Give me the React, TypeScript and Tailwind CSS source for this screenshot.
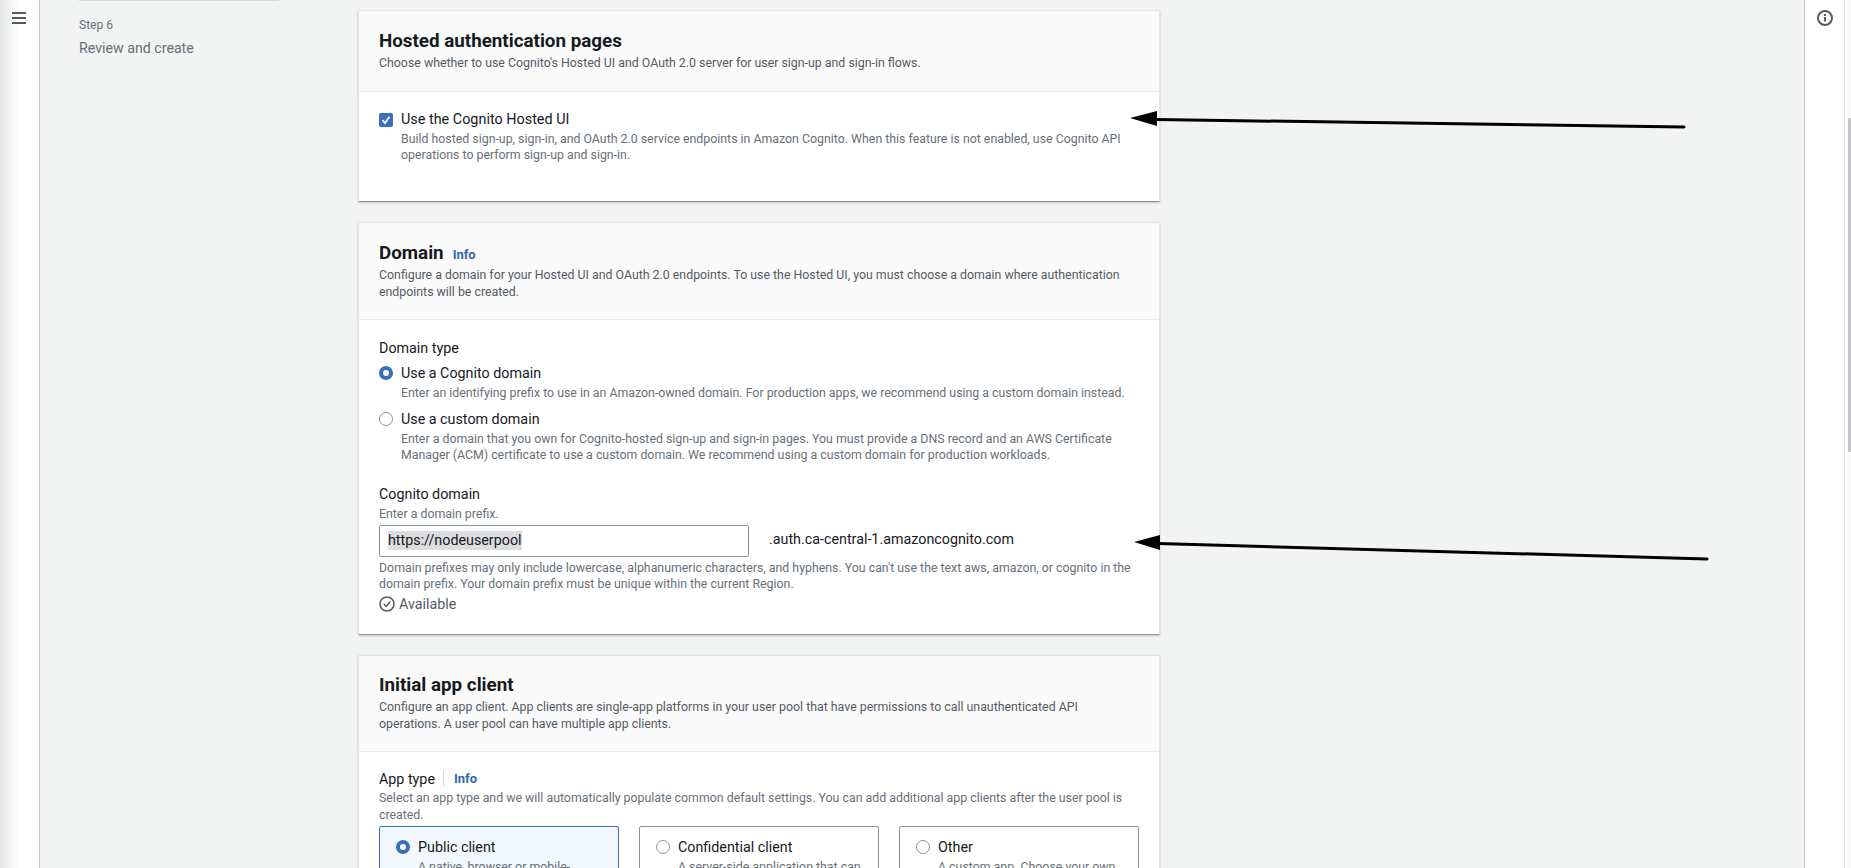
import React from 'react';

const Info = () => <a className="text-[13px] leading-[16px] font-bold text-[#2f67b3]">Info</a>;

const Card = ({ title, info, desc, children, className, headClass = 'pt-[18px]' }: { title: string; info?: boolean; desc: React.ReactNode; children: React.ReactNode; className: string; headClass?: string }) => (
  <section className={`bg-white border border-[#e3e5e6] border-b-[#8d9499] shadow-[0_1px_2px_rgba(0,28,36,0.2)] ${className}`}>
    <header className={`bg-[#fafafa] border-b border-[#eaeded] px-[20px] pb-[19px] ${headClass}`}>
      <div className="flex items-baseline gap-[9px]">
        <h2 className="text-[18.8px] leading-[24px] font-bold text-[#16191f]">{title}</h2>
        {info && <Info />}
      </div>
      <p className="text-[12.35px] leading-[16.5px] text-[#545b64] mt-[2px]">{desc}</p>
    </header>
    {children}
  </section>
);

const Radio = ({ checked }: { checked?: boolean }) => (
  <span className={`shrink-0 w-[14px] h-[14px] rounded-full border mt-[3px] ${checked ? 'border-[4px] border-[#3a6fbd] bg-white' : 'border-[#879596] bg-white'}`} />
);

const Option = ({ checked, label, children }: { checked?: boolean; label: string; children: React.ReactNode }) => (
  <div className="flex gap-[8px]">
    <Radio checked={checked} />
    <div>
      <div className="text-[14.3px] leading-[20px] text-[#16191f]">{label}</div>
      <p className="text-[12.35px] leading-[16.5px] text-[#687078] mt-[2px]">{children}</p>
    </div>
  </div>
);

const Tile = ({ checked, label, children }: { checked?: boolean; label: string; children: React.ReactNode }) => (
  <div className={`flex-1 h-[80px] rounded-[2px] border px-[16px] pt-[10px] ${checked ? 'border-[#3a6fbd] bg-[#f1f7fd]' : 'border-[#879596] bg-white'}`}>
    <Option checked={checked} label={label}>{children}</Option>
  </div>
);

// annotation arrows drawn on top of the screenshot
const Arrows = () => (
  <svg className="absolute left-[0px] top-[0px] pointer-events-none" width="1851" height="868" viewBox="0 0 1851 868">
    <path d="M1156 119.5 L1684 127" stroke="#000" strokeWidth="3" strokeLinecap="round" fill="none" />
    <path d="M1130 118 L1157 111 L1157 126 Z" fill="#000" />
    <path d="M1158 543.5 L1707 559" stroke="#000" strokeWidth="3" strokeLinecap="round" fill="none" />
    <path d="M1134 542 L1160 535 L1160 550 Z" fill="#000" />
  </svg>
);

export default function App() {
  return (
    <div className="relative flex h-[868px] w-[1851px] overflow-hidden bg-[#f2f3f3] font-['Roboto',sans-serif]">
      {/* left rail */}
      <div className="w-[40px] shrink-0 border-r border-[#c4c8cc] bg-gradient-to-r from-[#e4e6e6] via-white to-white pt-[12px] pl-[12px]">
        <div className="w-[14px] flex flex-col gap-[3px]">
          <span className="h-[2px] bg-[#545b64]" />
          <span className="h-[2px] bg-[#545b64]" />
          <span className="h-[2px] bg-[#545b64]" />
        </div>
      </div>

      {/* wizard steps */}
      <nav className="w-[318px] shrink-0 pl-[39px]">
        <div className="w-[200px] border-t border-[#d5dbdb] pt-[16px]">
          <div className="text-[12px] leading-[16px] text-[#687078]">Step 6</div>
          <div className="text-[14.2px] leading-[20px] text-[#687078] mt-[5px]">Review and create</div>
        </div>
      </nav>

      {/* form */}
      <main className="w-[802px] shrink-0 pt-[10px] flex flex-col gap-[20px]">
        <Card
          className="h-[192px] shrink-0"
          title="Hosted authentication pages"
          desc="Choose whether to use Cognito's Hosted UI and OAuth 2.0 server for user sign-up and sign-in flows."
        >
          <div className="px-[20px] pt-[18px] flex gap-[8px]">
            <span className="shrink-0 w-[14px] h-[14px] mt-[3px] rounded-[2px] bg-[#3a6fbd] flex items-center justify-center">
              <svg width="10" height="10" viewBox="0 0 10 10" fill="none"><path d="M1.5 5.2 L4 8 L8.5 1.8" stroke="#fff" strokeWidth="1.8" /></svg>
            </span>
            <div>
              <div className="text-[14.4px] leading-[20px] text-[#16191f]">Use the Cognito Hosted UI</div>
              <p className="text-[12.35px] leading-[16.5px] text-[#687078] mt-[1px]">
                Build hosted sign-up, sign-in, and OAuth 2.0 service endpoints in Amazon Cognito. When this feature is not enabled, use Cognito API<br />
                operations to perform sign-up and sign-in.
              </p>
            </div>
          </div>
        </Card>

        <Card
          className="h-[413px] shrink-0"
          title="Domain"
          info
          desc={<>Configure a domain for your Hosted UI and OAuth 2.0 endpoints. To use the Hosted UI, you must choose a domain where authentication<br />endpoints will be created.</>}
        >
          <div className="px-[20px] pt-[18px]">
            <div className="text-[14.3px] leading-[20px] text-[#16191f]">Domain type</div>
            <div className="mt-[5px] flex flex-col gap-[7px]">
              <Option checked label="Use a Cognito domain">Enter an identifying prefix to use in an Amazon-owned domain. For production apps, we recommend using a custom domain instead.</Option>
              <Option label="Use a custom domain">
                Enter a domain that you own for Cognito-hosted sign-up and sign-in pages. You must provide a DNS record and an AWS Certificate<br />
                Manager (ACM) certificate to use a custom domain. We recommend using a custom domain for production workloads.
              </Option>
            </div>
            <div className="mt-[20px] text-[14.3px] leading-[20px] text-[#16191f]">Cognito domain</div>
            <div className="text-[12.35px] leading-[16px] text-[#687078] mt-[2px]">Enter a domain prefix.</div>
            <div className="flex mt-[3px]">
              <div className="w-[370px] h-[32px] border border-[#879596] rounded-[2px] bg-white flex items-center pl-[8px]">
                <span className="text-[14.3px] leading-[19px] text-[#16191f] bg-[#dcdddf]">https://nodeuserpool</span>
              </div>
              <div className="ml-[20px] text-[14.3px] leading-[20px] text-[#16191f] mt-[4px]">.auth.ca-central-1.amazoncognito.com</div>
            </div>
            <p className="text-[12.35px] leading-[16.5px] text-[#687078] mt-[3px]">
              Domain prefixes may only include lowercase, alphanumeric characters, and hyphens. You can't use the text aws, amazon, or cognito in the<br />
              domain prefix. Your domain prefix must be unique within the current Region.
            </p>
            <div className="flex items-center gap-[4px] text-[14.3px] leading-[20px] text-[#545b64] mt-[1px]">
              <svg width="16" height="16" viewBox="0 0 16 16" fill="none" stroke="#545b64" strokeWidth="1.6"><circle cx="8" cy="8" r="7" /><path d="M4.8 8 L7.2 10.4 L11.2 5.6" /></svg>
              Available
            </div>
          </div>
        </Card>

        <Card
          className="shrink-0"
          headClass="pt-[17px]"
          title="Initial app client"
          desc={<>Configure an app client. App clients are single-app platforms in your user pool that have permissions to call unauthenticated API<br />operations. A user pool can have multiple app clients.</>}
        >
          <div className="px-[20px] pt-[17px]">
            <div className="flex items-center text-[14.3px] leading-[20px] text-[#16191f]">
              App type
              <span className="ml-[8px] mr-[10px] h-[16px] border-l border-[#d5dbdb]" />
              <Info />
            </div>
            <p className="text-[12.35px] leading-[16.5px] text-[#687078] mt-[1px]">
              Select an app type and we will automatically populate common default settings. You can add additional app clients after the user pool is<br />
              created.
            </p>
            <div className="flex gap-[20px] mt-[3px]">
              <Tile checked label="Public client">A native, browser or mobile-<br />device app.</Tile>
              <Tile label="Confidential client">A server-side application that can<br />securely store a secret.</Tile>
              <Tile label="Other">A custom app. Choose your own<br />settings.</Tile>
            </div>
          </div>
        </Card>
      </main>

      {/* gap up to the tools rail */}
      <div className="flex-1" />

      {/* tools rail */}
      <aside className="w-[47px] shrink-0 border-l border-[#c4c8cc] bg-white flex">
        <div className="w-[39px] flex justify-center pt-[10px]">
          <svg width="16" height="16" viewBox="0 0 16 16" fill="none">
            <circle cx="8" cy="8" r="7" stroke="#545b64" strokeWidth="2" />
            <rect x="7" y="7" width="2" height="4.5" fill="#545b64" />
            <rect x="7" y="4" width="2" height="2" fill="#545b64" />
          </svg>
        </div>
        <div className="flex-1 bg-[#fafafa] border-l border-[#e8e8e8] pt-[118px] flex justify-end">
          <div className="w-[3px] h-[334px] rounded-tl-[2px] rounded-bl-[2px] bg-[#c2c2c7]" />
        </div>
      </aside>

      <Arrows />
    </div>
  );
}
